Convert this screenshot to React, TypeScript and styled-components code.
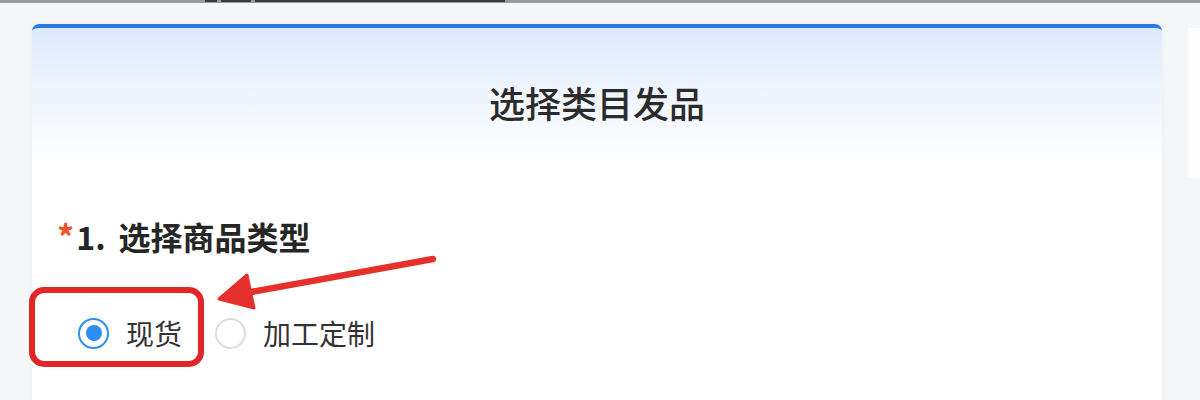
import React from 'react';
import styled, {createGlobalStyle} from 'styled-components';

const GlobalStyle = createGlobalStyle`
  html, body {
    margin: 0;
    padding: 0;
    background: #f5f6f8;
    font-family: "Noto Sans CJK SC", "Noto Sans", sans-serif;
  }
`;

const Page = styled.div`
  position: relative;
  width: 1200px;
  height: 400px;
  overflow: hidden;
  background: #f5f6f8;
`;

const TopStrip = styled.div`
  height: 3px;
  background: #9b9b9b;
  display: flex;
  gap: 4px;
  padding-left: 205px;
  overflow: hidden;
`;

const StripMark = styled.span<{w: number}>`
  width: ${p => p.w}px;
  height: 2px;
  background: #3a3a3a;
`;

const Main = styled.div`
  display: flex;
  padding-top: 21px;
`;

const Card = styled.div`
  margin-left: 32px;
  width: 1130px;
  height: 380px;
  border-top: 4px solid #2b7be6;
  border-radius: 7px 7px 0 0;
  background: linear-gradient(180deg, #dde9fb 0px, #eef4fd 60px, #ffffff 140px);
  box-shadow: 0 0 6px rgba(0, 0, 0, 0.04);
`;

const SideRail = styled.div`
  flex: 1;
  display: flex;
  justify-content: flex-end;
  padding-top: 4px;
`;

const SidePanel = styled.div`
  width: 12px;
  height: 150px;
  background: #fdfdfe;
`;

const Title = styled.h1`
  margin: 0;
  padding-top: 50px;
  font-size: 36px;
  line-height: 48px;
  font-weight: 500;
  color: #2b2b2b;
  text-align: center;
`;

const Heading = styled.h2`
  margin: 88px 0 0;
  padding-left: 25px;
  display: flex;
  align-items: center;
  font-size: 32px;
  line-height: 44px;
  font-weight: 700;
  color: #262626;
`;

const Star = styled.span`
  color: #f0512b;
  font-size: 34px;
  margin-right: 2px;
`;

const Num = styled.span`
  margin-right: 13px;
`;

const Options = styled.div`
  margin-top: 55px;
  padding-left: 46px;
  display: flex;
  align-items: center;
  gap: 33px;
`;

const Option = styled.label`
  display: flex;
  align-items: center;
  gap: 17px;
  font-size: 28px;
  line-height: 40px;
  color: #333;
`;

const Radio = styled.span<{checked?: boolean}>`
  box-sizing: border-box;
  width: 31px;
  height: 31px;
  border-radius: 50%;
  border: 2px solid ${p => (p.checked ? '#2f8ef4' : '#dcdcdc')};
  background: #fff;
  display: flex;
  align-items: center;
  justify-content: center;

  &::after {
    content: '';
    width: 16px;
    height: 16px;
    border-radius: 50%;
    background: ${p => (p.checked ? '#2f8ef4' : 'transparent')};
  }
`;

const Highlight = styled.div`
  position: absolute;
  left: 29px;
  top: 287px;
  width: 175px;
  height: 80px;
  box-sizing: border-box;
  border: 6px solid #e1262a;
  border-radius: 15px;
`;

const ArrowLayer = styled.svg`
  position: absolute;
  left: 0;
  top: 0;
  pointer-events: none;
`;

export default function App() {
  return (
    <Page>
      <GlobalStyle />
      <TopStrip>
        <StripMark w={12} />
        <StripMark w={30} />
        <StripMark w={250} />
      </TopStrip>
      <Main>
        <Card>
          <Title>选择类目发品</Title>
          <Heading>
            <Star>*</Star>
            <Num>1.</Num>选择商品类型
          </Heading>
          <Options>
            <Option>
              <Radio checked />
              现货
            </Option>
            <Option>
              <Radio />
              加工定制
            </Option>
          </Options>
        </Card>
        <SideRail>
          <SidePanel />
        </SideRail>
      </Main>
      <Highlight />
      <ArrowLayer width="1200" height="400" viewBox="0 0 1200 400">
        <line
          x1="433"
          y1="259"
          x2="240"
          y2="294"
          stroke="#e5302b"
          strokeWidth="6.5"
          strokeLinecap="round"
        />
        <polygon
          points="219,299 247,275 254,308"
          fill="#e5302b"
          stroke="#e5302b"
          strokeWidth="3"
          strokeLinejoin="round"
        />
      </ArrowLayer>
    </Page>
  );
}
